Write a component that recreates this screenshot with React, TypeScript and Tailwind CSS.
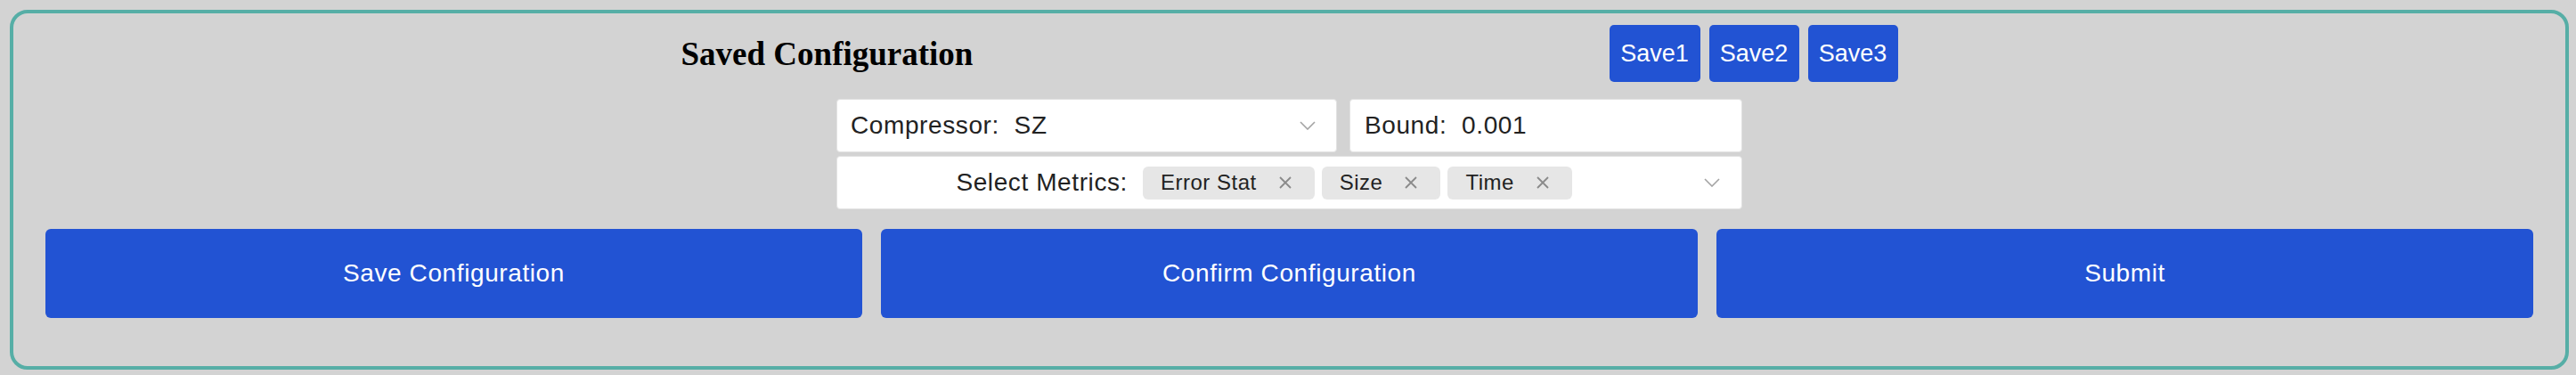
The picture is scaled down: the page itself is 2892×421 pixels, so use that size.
import React from "react";

const sans = { fontFamily: '"Liberation Sans", Arial, sans-serif' };

function Chevron({ className }: { className?: string }) {
  return (
    <svg className={className} width="18" height="10" viewBox="0 0 18 10" fill="none">
      <polyline points="1,1 9,9 17,1" stroke="#a3a3a3" strokeWidth="1.6" />
    </svg>
  );
}

function Chip({ label }: { label: string }) {
  return (
    <div className="flex items-center h-[37px] rounded-[6px] bg-[#e6e6e6] pl-[20px] pr-[25px] text-[24px] tracking-[0.5px] text-[#222]">
      <span>{label}</span>
      <svg className="ml-[24px]" width="16" height="16" viewBox="0 0 16 16" fill="none">
        <path d="M2 2 L14 14 M14 2 L2 14" stroke="#8a8a8a" strokeWidth="1.8" />
      </svg>
    </div>
  );
}

export default function App() {
  return (
    <div className="min-h-screen w-full bg-[#d3d3d3] pt-[11px] pl-[11px]" style={sans}>
      <div className="w-[2873px] h-[404px] border-4 border-[#56aea6] rounded-[20px] flex flex-col pt-[13px]">
        {/* Header */}
        <div className="flex items-center justify-center h-[64px] gap-[714px]">
          <h2
            className="w-[328px] text-center whitespace-nowrap text-[37px] font-bold text-black leading-none"
            style={{ fontFamily: '"Liberation Serif", "Times New Roman", serif' }}
          >
            Saved Configuration
          </h2>
          <div className="flex gap-[10px]">
            {["Save1", "Save2", "Save3"].map((s, i) => (
              <button
                key={s}
                className={`${i === 0 ? "w-[102px]" : "w-[101px]"} h-[64px] rounded-[5px] bg-[#2253d3] text-white text-[27px]`}
              >
                {s}
              </button>
            ))}
          </div>
        </div>

        {/* Form */}
        <div className="mx-auto mt-[19px] w-[1017px] flex flex-col gap-[4px] text-[28px] tracking-[0.6px] text-[#222]">
          <div className="flex gap-[14px]">
            <div className="w-[562px] h-[60px] bg-white rounded-[4px] border border-[#e2e2e2] flex items-center pl-[15px] pr-[23px]">
              <span className="whitespace-pre">Compressor:  SZ</span>
              <Chevron className="ml-auto" />
            </div>
            <div className="flex-1 h-[60px] bg-white rounded-[4px] border border-[#e2e2e2] flex items-center pl-[16px]">
              <span className="whitespace-pre">Bound:  0.001</span>
            </div>
          </div>
          <div className="h-[60px] bg-white rounded-[4px] border border-[#e2e2e2] flex items-center pr-[24px]">
            <div className="w-[326px] text-right whitespace-nowrap">Select Metrics:</div>
            <div className="flex gap-[8px] ml-[17px]">
              <Chip label="Error Stat" />
              <Chip label="Size" />
              <Chip label="Time" />
            </div>
            <Chevron className="ml-auto" />
          </div>
        </div>

        {/* Actions */}
        <div className="mt-[22px] px-[36px] grid grid-cols-3 gap-[21px]">
          {["Save Configuration", "Confirm Configuration", "Submit"].map((t) => (
            <button
              key={t}
              className="h-[100px] rounded-[6px] bg-[#2253d3] text-white text-[28px] tracking-[0.6px]"
            >
              {t}
            </button>
          ))}
        </div>
      </div>
    </div>
  );
}
